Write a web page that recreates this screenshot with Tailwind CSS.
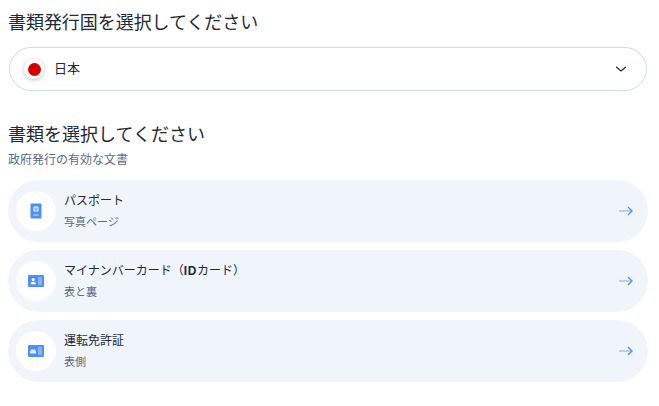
<!DOCTYPE html>
<html lang="ja">
<head>
<meta charset="utf-8">
<script src="https://cdn.jsdelivr.net/npm/@tailwindcss/browser@4"></script>
</head>
<body class="bg-white font-['Inter','Noto_Sans_CJK_JP',sans-serif] text-[#1e293b] overflow-hidden">
<main class="w-[659px] h-[406px] px-2 pt-[10px] pr-[11px]">
    <h2 class="text-[18px] leading-[26px] tracking-[-0.05px] text-[#1f2937]">書類発行国を選択してください</h2>

    <!-- country select -->
    <button class="mt-[11px] ml-px w-[638px] h-[44px] flex items-center rounded-full border border-[#cfdbe8] bg-white pl-[14px] pr-[19px]">
        <span class="w-5 h-5 rounded-full bg-white shadow-[0_1px_4px_rgba(0,0,0,0.25)] flex items-center justify-center">
            <span class="w-[13px] h-[13px] rounded-full bg-[#d60000]"></span>
        </span>
        <span class="ml-[10px] text-[13px] text-[#1f2937]">日本</span>
        <svg class="ml-auto w-3 h-3 text-[#1e293b]" viewBox="0 0 12 12" fill="none" stroke="currentColor" stroke-width="1.2" stroke-linecap="round" stroke-linejoin="round" aria-hidden="true">
            <path d="M1.5 4.2 6 8l4.5-3.8"/>
        </svg>
    </button>

    <h2 class="mt-[31px] text-[18px] leading-[26px] text-[#1f2937]">書類を選択してください</h2>
    <p class="mt-[3px] text-[12px] leading-[18px] text-[#5b6b7f]">政府発行の有効な文書</p>

    <div class="mt-[11px] flex flex-col gap-2">
        <a class="h-[62px] flex items-center rounded-[31px] bg-[#f0f4fb] pl-2 pr-[15px]">
            <span class="w-10 h-10 rounded-full bg-white flex items-center justify-center">
                <svg class="w-4 h-4" viewBox="0 0 16 16" aria-hidden="true">
                    <rect x="2.5" y="0.5" width="11" height="15" rx="1" fill="#4a90f7"/>
                    <circle cx="8" cy="6" r="3" fill="#d5e5fd"/>
                    <path d="M8 3v6M5 6h6" stroke="#4a90f7" stroke-width="0.6"/>
                    <rect x="5.5" y="11.5" width="5" height="1" fill="#d5e5fd"/>
                </svg>
            </span>
            <span class="ml-2 flex-1">
                <span class="block text-[12px] leading-[18px] text-[#1f2937]">パスポート</span>
                <span class="block mt-[4px] text-[11px] leading-[16px] text-[#5b6b7f]">写真ページ</span>
            </span>
            <svg class="w-[14px] h-[10px] text-[#4a90f7]" viewBox="0 0 14 10" fill="none" stroke="currentColor" stroke-width="1.3" aria-hidden="true">
                <path d="M0 5h13" stroke-opacity="0.55"/>
                <path d="M9 1l4 4-4 4"/>
            </svg>
        </a>
        <a class="h-[62px] flex items-center rounded-[31px] bg-[#f0f4fb] pl-2 pr-[15px]">
            <span class="w-10 h-10 rounded-full bg-white flex items-center justify-center">
                <svg class="w-4 h-3" viewBox="0 0 16 12" aria-hidden="true">
                    <rect width="16" height="12" rx="1" fill="#4a90f7"/>
                    <circle cx="5.2" cy="4.6" r="1.6" fill="#fff"/>
                    <path d="M2.6 9.2c0-1.6 1-2.4 2.6-2.4s2.6.8 2.6 2.4z" fill="#fff"/>
                    <path d="M10 3h4M10 5h4M10 7h4M10 9h4" stroke="#c5dafc" stroke-width="1.1"/>
                </svg>
            </span>
            <span class="ml-2 flex-1">
                <span class="block text-[12px] leading-[18px] text-[#1f2937]">マイナンバーカード（<b class="font-bold tracking-[0.6px]">ID</b>カード）</span>
                <span class="block mt-[4px] text-[11px] leading-[16px] text-[#5b6b7f]">表と裏</span>
            </span>
            <svg class="w-[14px] h-[10px] text-[#4a90f7]" viewBox="0 0 14 10" fill="none" stroke="currentColor" stroke-width="1.3" aria-hidden="true">
                <path d="M0 5h13" stroke-opacity="0.55"/>
                <path d="M9 1l4 4-4 4"/>
            </svg>
        </a>
        <a class="h-[62px] flex items-center rounded-[31px] bg-[#f0f4fb] pl-2 pr-[15px]">
            <span class="w-10 h-10 rounded-full bg-white flex items-center justify-center">
                <svg class="w-4 h-3" viewBox="0 0 16 12" aria-hidden="true">
                    <rect width="16" height="12" rx="1" fill="#4a90f7"/>
                    <path d="M2 8.6V6.4L3.2 4.4h3.6L8 6.4v2.2z" fill="#e3eefe"/>
                    <path d="M10 3h4M10 5h4M10 7h4M10 9h4" stroke="#c5dafc" stroke-width="1.1"/>
                </svg>
            </span>
            <span class="ml-2 flex-1">
                <span class="block text-[12px] leading-[18px] text-[#1f2937]">運転免許証</span>
                <span class="block mt-[4px] text-[11px] leading-[16px] text-[#5b6b7f]">表側</span>
            </span>
            <svg class="w-[14px] h-[10px] text-[#4a90f7]" viewBox="0 0 14 10" fill="none" stroke="currentColor" stroke-width="1.3" aria-hidden="true">
                <path d="M0 5h13" stroke-opacity="0.55"/>
                <path d="M9 1l4 4-4 4"/>
            </svg>
        </a>
    </div>
</main>
</body>
</html>
